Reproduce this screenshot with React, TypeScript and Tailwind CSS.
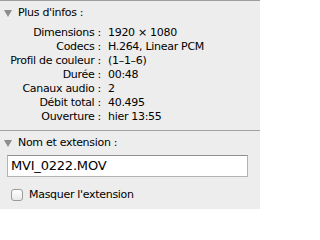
import React from "react";

const infos = [
  ["Dimensions", "1920 × 1080"],
  ["Codecs", "H.264, Linear PCM"],
  ["Profil de couleur", "(1–1–6)"],
  ["Durée", "00:48"],
  ["Canaux audio", "2"],
  ["Débit total", "40.495"],
  ["Ouverture", "hier 13:55"],
];

function Triangle() {
  return (
    <svg width="8" height="7" viewBox="0 0 8 7" className="shrink-0">
      <path d="M0 0 H8 L4 7 Z" fill="#8c8c8c" />
    </svg>
  );
}

export default function App() {
  return (
    <div
      className="w-[260px] h-[209px] bg-[#ededed] border-t border-[#9d9d9d] text-black overflow-hidden"
      style={{ fontFamily: '"DejaVu Sans", "Lucida Grande", sans-serif' }}
    >
      <div className="flex items-center gap-[6px] pl-[4px] pt-[5px] h-[19px] text-[11px] leading-[14px] tracking-[-0.3px]">
        <Triangle />
        <span>Plus d'infos :</span>
      </div>

      <div className="mt-[6px] grid grid-cols-[101px_1fr] text-[11px] leading-[14px] tracking-[-0.3px]">
        {infos.map(([label, value]) => (
          <React.Fragment key={label}>
            <div className="text-right whitespace-nowrap">{label} :</div>
            <div className="pl-[7px] whitespace-nowrap">{value}</div>
          </React.Fragment>
        ))}
      </div>

      <div className="mt-[6px] border-t border-[#a3a3a3]" />

      <div className="flex items-center gap-[6px] pl-[4px] pt-[5px] h-[19px] text-[11px] leading-[14px] tracking-[-0.3px]">
        <Triangle />
        <span>Nom et extension :</span>
      </div>

      <div className="mt-[5px] ml-[7px] w-[241px] h-[22px] bg-white border border-[#b3b3b3] border-t-[#8f8f8f] flex items-center pl-[3px] text-[13px] tracking-[-0.2px]">
        MVI_0222.MOV
      </div>

      <div className="mt-[10px] ml-[11px] flex items-center gap-[6px] text-[11px] tracking-[-0.3px]">
        <div className="w-[12px] h-[12px] rounded-[3px] border border-[#9a9a9a] bg-gradient-to-b from-white to-[#e9e9e9]" />
        <span>Masquer l'extension</span>
      </div>

      <div className="mt-[8px] border-t border-[#a3a3a3]" />
    </div>
  );
}
